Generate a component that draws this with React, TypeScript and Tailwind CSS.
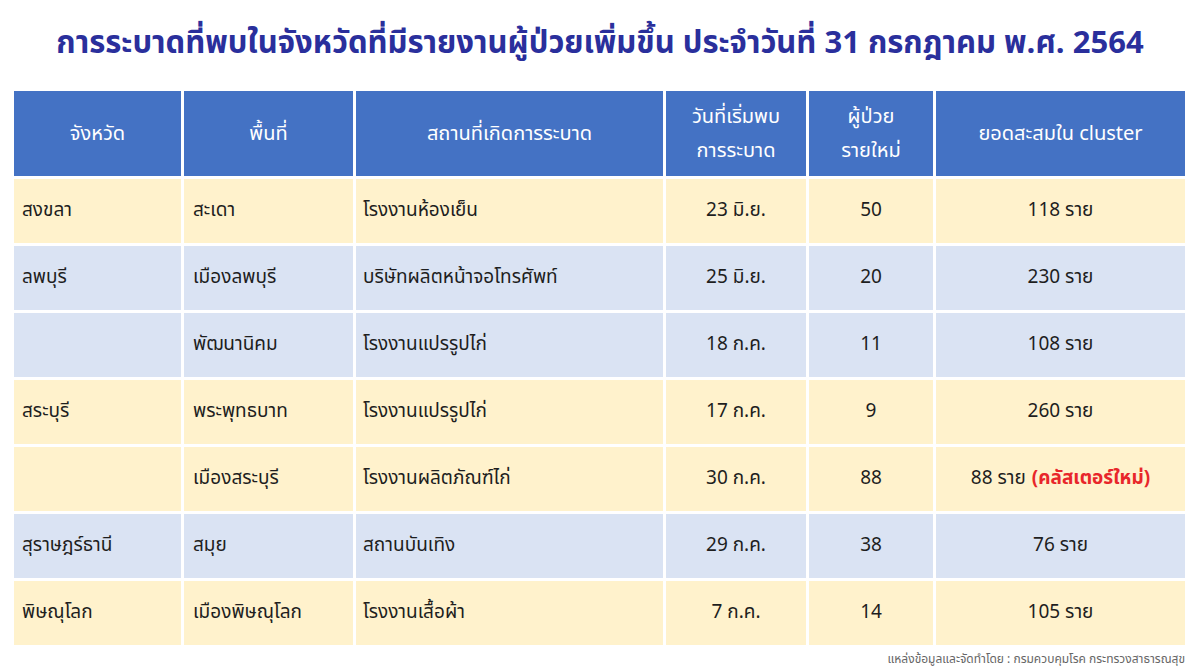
import React from "react";

const rows = [
  { p: "สงขลา", a: "สะเดา", s: "โรงงานห้องเย็น", d: "23 มิ.ย.", n: "50", t: "118 ราย", c: "y" },
  { p: "ลพบุรี", a: "เมืองลพบุรี", s: "บริษัทผลิตหน้าจอโทรศัพท์", d: "25 มิ.ย.", n: "20", t: "230 ราย", c: "b" },
  { p: "", a: "พัฒนานิคม", s: "โรงงานแปรรูปไก่", d: "18 ก.ค.", n: "11", t: "108 ราย", c: "b" },
  { p: "สระบุรี", a: "พระพุทธบาท", s: "โรงงานแปรรูปไก่", d: "17 ก.ค.", n: "9", t: "260 ราย", c: "y" },
  { p: "", a: "เมืองสระบุรี", s: "โรงงานผลิตภัณฑ์ไก่", d: "30 ก.ค.", n: "88", t: "88 ราย", c: "y", extra: true },
  { p: "สุราษฎร์ธานี", a: "สมุย", s: "สถานบันเทิง", d: "29 ก.ค.", n: "38", t: "76 ราย", c: "b" },
  { p: "พิษณุโลก", a: "เมืองพิษณุโลก", s: "โรงงานเสื้อผ้า", d: "7 ก.ค.", n: "14", t: "105 ราย", c: "y" },
];

const font = { fontFamily: '"Noto Sans Thai", "Leelawadee UI", Tahoma, "Noto Sans", sans-serif' };

export default function App() {
  return (
    <div className="w-[1200px] h-[668px] bg-white overflow-hidden text-[#1e1e1e]" style={font}>
      <div className="h-[91px] flex items-center justify-center pb-[2px]">
        <h1 className="text-[31px] font-bold text-[#2a2f9c]">
          การระบาดที่พบในจังหวัดที่มีรายงานผู้ป่วยเพิ่มขึ้น ประจำวันที่ 31 กรกฎาคม พ.ศ. 2564
        </h1>
      </div>
      <div className="ml-[14px] w-[1171px] grid grid-cols-[167px_169px_307px_140px_124px_1fr] gap-[3px] text-[19px]">
        <div className="h-[85px] bg-[#4472c4] text-white text-[20px] flex items-center justify-center">จังหวัด</div>
        <div className="h-[85px] bg-[#4472c4] text-white text-[20px] flex items-center justify-center">พื้นที่</div>
        <div className="h-[85px] bg-[#4472c4] text-white text-[20px] flex items-center justify-center">สถานที่เกิดการระบาด</div>
        <div className="h-[85px] bg-[#4472c4] text-white text-[20px] flex flex-col items-center justify-center leading-[34px]">
          <span>วันที่เริ่มพบ</span>
          <span>การระบาด</span>
        </div>
        <div className="h-[85px] bg-[#4472c4] text-white text-[20px] flex flex-col items-center justify-center leading-[34px]">
          <span>ผู้ป่วย</span>
          <span>รายใหม่</span>
        </div>
        <div className="h-[85px] bg-[#4472c4] text-white text-[20px] flex items-center justify-center">ยอดสะสมใน cluster</div>
        {rows.map((r, i) => {
          const bg = r.c === "y" ? "bg-[#fff2cc]" : "bg-[#dae3f3]";
          return (
            <React.Fragment key={i}>
              <div className={`h-[64px] ${bg} flex items-center pl-[8px]`}>{r.p}</div>
              <div className={`h-[64px] ${bg} flex items-center pl-[9px]`}>{r.a}</div>
              <div className={`h-[64px] ${bg} flex items-center pl-[7px]`}>{r.s}</div>
              <div className={`h-[64px] ${bg} flex items-center justify-center`}>{r.d}</div>
              <div className={`h-[64px] ${bg} flex items-center justify-center`}>{r.n}</div>
              <div className={`h-[64px] ${bg} flex items-center justify-center`}>
                {r.t}
                {r.extra && <span className="ml-[6px] font-bold text-[#e8262a]">(คลัสเตอร์ใหม่)</span>}
              </div>
            </React.Fragment>
          );
        })}
      </div>
      <div className="w-[1185px] flex justify-end pt-[5px] text-[12px] text-[#666]">
        แหล่งข้อมูลและจัดทำโดย : กรมควบคุมโรค กระทรวงสาธารณสุข
      </div>
    </div>
  );
}
